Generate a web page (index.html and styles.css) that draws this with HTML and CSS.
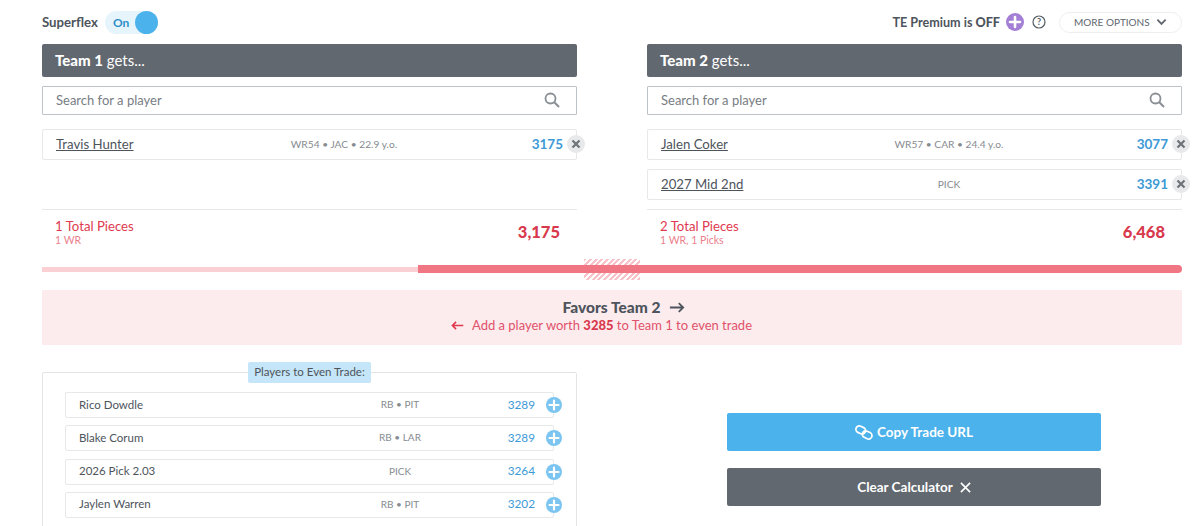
FILE: index.html
```html
<!DOCTYPE html>
<html lang="en">
  <head>
    <meta charset="UTF-8" />
    <title>Trade Calculator</title>
    <link rel="stylesheet" href="styles.css">
  </head>
  <body>
    <div class="page">
      <div class="options">
        <div class="superflex">
          <span>Superflex</span>
          <span class="toggle"><span class="toggle-label">On</span><span class="toggle-knob"></span></span>
        </div>
        <div class="options-right">
          <span class="te">TE Premium is <b>OFF</b></span>
          <span class="te-plus">
            <svg viewBox="0 0 18 18" width="18" height="18"><path d="M9 4v10M4 9h10" stroke="#fff" stroke-width="2.6" stroke-linecap="round"/></svg>
          </span>
          <svg class="help" viewBox="0 0 14 14" width="14" height="14"><circle cx="7" cy="7" r="6" fill="none" stroke="#555c63" stroke-width="1.2"/><text x="7" y="10.2" text-anchor="middle" class="help-mark">?</text></svg>
          <button class="more">MORE OPTIONS
            <svg viewBox="0 0 12 8" width="11" height="8"><path d="M1.5 1.5 6 6l4.500-4.500" fill="none" stroke="#60676e" stroke-width="2"/></svg>
          </button>
        </div>
      </div>

      <div class="teams">
        <section class="team">
          <h2 class="team-head"><b>Team 1</b> gets...</h2>
          <div class="search">
            <span>Search for a player</span>
            <svg viewBox="0 0 16 16" width="16" height="16"><circle cx="6.500" cy="6.500" r="5" fill="none" stroke="#8a8f94" stroke-width="1.800"/><path d="m10.300 10.300 4.700 4.700" stroke="#8a8f94" stroke-width="2"/></svg>
          </div>
          <div class="picked">
            <div class="player"><a class="name">Travis Hunter</a><span class="meta">WR54 &bull; JAC &bull; 22.9 y.o.</span><span class="value">3175</span><span class="remove"><svg viewBox="0 0 18 18" width="18" height="18"><path d="m5.500 5.500 7 7M12.500 5.500l-7 7" stroke="#6d7378" stroke-width="2.200"/></svg></span></div>
          </div>
          <div class="total">
            <div><div class="pieces">1 Total Pieces</div><div class="breakdown">1 WR</div></div>
            <div class="sum">3,175</div>
          </div>
        </section>
        <section class="team">
          <h2 class="team-head"><b>Team 2</b> gets...</h2>
          <div class="search">
            <span>Search for a player</span>
            <svg viewBox="0 0 16 16" width="16" height="16"><circle cx="6.500" cy="6.500" r="5" fill="none" stroke="#8a8f94" stroke-width="1.800"/><path d="m10.300 10.300 4.700 4.700" stroke="#8a8f94" stroke-width="2"/></svg>
          </div>
          <div class="picked">
            <div class="player"><a class="name">Jalen Coker</a><span class="meta">WR57 &bull; CAR &bull; 24.4 y.o.</span><span class="value">3077</span><span class="remove"><svg viewBox="0 0 18 18" width="18" height="18"><path d="m5.500 5.500 7 7M12.500 5.500l-7 7" stroke="#6d7378" stroke-width="2.200"/></svg></span></div>
            <div class="player"><a class="name">2027 Mid 2nd</a><span class="meta">PICK</span><span class="value">3391</span><span class="remove"><svg viewBox="0 0 18 18" width="18" height="18"><path d="m5.500 5.500 7 7M12.500 5.500l-7 7" stroke="#6d7378" stroke-width="2.200"/></svg></span></div>
          </div>
          <div class="total">
            <div><div class="pieces">2 Total Pieces</div><div class="breakdown">1 WR, 1 Picks</div></div>
            <div class="sum">6,468</div>
          </div>
        </section>
      </div>

      <div class="meter">
        <div class="meter-left"></div>
        <div class="meter-right"></div>
        <div class="meter-even"></div>
      </div>

      <div class="verdict">
        <div class="verdict-title">Favors Team 2
          <svg viewBox="0 0 18 12" width="16" height="11"><path d="M1 6h15M11 1l5 5-5 5" fill="none" stroke="#4d545c" stroke-width="2"/></svg>
        </div>
        <div class="verdict-note">
          <svg viewBox="0 0 18 12" width="13" height="9"><path d="M17 6H2M7 1 2 6l5 5" fill="none" stroke="#e0394f" stroke-width="2.200"/></svg>
          <span>Add a player worth <b>3285</b> to Team 1 to even trade</span>
        </div>
      </div>

      <div class="bottom">
        <section class="suggest">
          <div class="suggest-title">Players to Even Trade:</div>
          <div class="suggest-row"><span class="name">Rico Dowdle</span><span class="meta">RB &bull; PIT</span><span class="value">3289</span><span class="add"><svg viewBox="0 0 16 16" width="16" height="16"><path d="M8 3.500v9M3.500 8h9" stroke="#fff" stroke-width="2.200" stroke-linecap="round"/></svg></span></div>
          <div class="suggest-row"><span class="name">Blake Corum</span><span class="meta">RB &bull; LAR</span><span class="value">3289</span><span class="add"><svg viewBox="0 0 16 16" width="16" height="16"><path d="M8 3.500v9M3.500 8h9" stroke="#fff" stroke-width="2.200" stroke-linecap="round"/></svg></span></div>
          <div class="suggest-row"><span class="name">2026 Pick 2.03</span><span class="meta">PICK</span><span class="value">3264</span><span class="add"><svg viewBox="0 0 16 16" width="16" height="16"><path d="M8 3.500v9M3.500 8h9" stroke="#fff" stroke-width="2.200" stroke-linecap="round"/></svg></span></div>
          <div class="suggest-row"><span class="name">Jaylen Warren</span><span class="meta">RB &bull; PIT</span><span class="value">3202</span><span class="add"><svg viewBox="0 0 16 16" width="16" height="16"><path d="M8 3.500v9M3.500 8h9" stroke="#fff" stroke-width="2.200" stroke-linecap="round"/></svg></span></div>
        </section>
        <div class="actions">
          <button class="action action-copy">
            <svg viewBox="0 0 20 16" width="18" height="15"><g fill="none" stroke="#fff" stroke-width="1.900"><rect x="1" y="1.500" width="11" height="7.500" rx="3.700" transform="rotate(25 6.500 5)"/><rect x="8" y="7" width="11" height="7.500" rx="3.700" transform="rotate(25 13.500 10.700)"/></g></svg>
            Copy Trade URL
          </button>
          <button class="action action-clear">Clear Calculator
            <svg viewBox="0 0 12 12" width="11" height="11"><path d="m1 1 10 10M11 1 1 11" stroke="#fff" stroke-width="1.800"/></svg>
          </button>
        </div>
      </div>
    </div>
  </body>
</html>
```

FILE: styles.css
```css
html,
body {
  margin: 0;
  height: 526px;
  overflow: hidden;
}
body {
  font-family: "Lato", "Open Sans", sans-serif;
  color: #4d545c;
  background: #fff;
}
.page {
  padding: 10px 18px 0 42px;
}
.options {
  display: flex;
  justify-content: space-between;
  align-items: center;
  height: 24px;
}
.superflex {
  display: flex;
  align-items: center;
  gap: 7px;
  font-size: 13.200px;
  font-weight: 700;
}
.toggle {
  display: flex;
  align-items: center;
  justify-content: space-between;
  width: 53px;
  height: 23px;
  padding-left: 8px;
  box-sizing: border-box;
  border-radius: 12px;
  background: #e6f4fc;
  font-size: 12px;
  color: #2f8fc8;
}
.toggle-knob {
  width: 23px;
  height: 23px;
  border-radius: 50%;
  background: #4cb2eb;
}
.options-right {
  display: flex;
  align-items: center;
  font-size: 12.600px;
  font-weight: 700;
}
.te b {
  font-weight: 900;
}
.te-plus {
  display: flex;
  align-items: center;
  justify-content: center;
  width: 18px;
  height: 18px;
  margin-left: 6px;
  border-radius: 50%;
  background: #a37fd6;
}
.help {
  margin-left: 8px;
}
.help-mark {
  font-size: 9px;
  font-weight: 700;
  fill: #555c63;
}
.more {
  display: flex;
  align-items: center;
  justify-content: space-between;
  width: 123px;
  height: 21px;
  margin-left: 13px;
  padding: 0 14px;
  border: 1px solid #eceef0;
  border-radius: 11px;
  background: #fff;
  font: 400 10px "Lato", sans-serif;
  color: #60676e;
}
.teams {
  display: grid;
  grid-template-columns: 535px 535px;
  gap: 70px;
  margin-top: 10px;
}
.team-head {
  margin: 0;
  height: 33px;
  padding-left: 13px;
  border-radius: 2px;
  background: #62686f;
  color: #fff;
  font-size: 15px;
  font-weight: 400;
  line-height: 32px;
}
.team-head b {
  font-weight: 900;
}
.search {
  display: flex;
  justify-content: space-between;
  align-items: center;
  height: 29px;
  margin-top: 9px;
  padding: 0 16px 2px 13px;
  box-sizing: border-box;
  border: 1px solid #bcc2c8;
  border-radius: 1px;
  font-size: 13px;
  color: #777d83;
}
.picked {
  display: flex;
  flex-direction: column;
  gap: 9px;
  height: 80px;
  margin-top: 14px;
}
.player {
  position: relative;
  display: grid;
  grid-template-columns: 188px 200px 1fr;
  align-items: center;
  height: 31px;
  padding: 0 13px 2px 13px;
  box-sizing: border-box;
  border: 1px solid #e6e8ea;
  border-radius: 2px;
}
.name {
  font-size: 13.200px;
  color: #4d545c;
}
a.name {
  text-decoration: underline;
}
.meta {
  font-size: 10.200px;
  color: #868b90;
  text-align: center;
}
.value {
  font-size: 13.500px;
  font-weight: 700;
  color: #3d9ad6;
  text-align: right;
}
.remove {
  position: absolute;
  right: -9px;
  top: 5px;
  width: 18px;
  height: 18px;
  border-radius: 50%;
  background: #e8e9eb;
}
.remove svg {
  display: block;
}
.total {
  display: flex;
  justify-content: space-between;
  align-items: center;
  height: 44px;
  padding: 0 17px 2px 13px;
  border-top: 1px solid #e6e8ea;
  color: #e0394f;
}
.pieces {
  font-size: 13.200px;
  line-height: 16px;
}
.breakdown {
  font-size: 10.500px;
  line-height: 13px;
  color: #ea7f8c;
}
.sum {
  font-size: 16.500px;
  font-weight: 900;
  color: #d8394d;
}
.meter {
  position: relative;
  display: flex;
  align-items: center;
  height: 8px;
  margin-top: 9px;
}
.meter-left {
  width: 376px;
  height: 5px;
  background: #fbd0d5;
}
.meter-right {
  flex: 1;
  height: 8px;
  border-radius: 0 4px 4px 0;
  background: #f07684;
}
.meter-even {
  position: absolute;
  left: 542px;
  top: -6px;
  width: 56px;
  height: 21px;
  background: repeating-linear-gradient(135deg, #f9c2c9 0 2px, transparent 2px 4px);
  z-index: -1;
}
.verdict {
  height: 55px;
  margin-top: 17px;
  padding-top: 8px;
  box-sizing: border-box;
  background: #fdecee;
  text-align: center;
}
.verdict-title {
  display: flex;
  justify-content: center;
  align-items: center;
  gap: 9px;
  margin-left: 24px;
  font-size: 15.500px;
  font-weight: 900;
  line-height: 18px;
}
.verdict-note {
  display: flex;
  justify-content: center;
  align-items: center;
  gap: 8px;
  margin-right: 21px;
  font-size: 13px;
  line-height: 19px;
  color: #e0526a;
}
.verdict-note b {
  font-weight: 900;
  color: #d8394d;
}
.bottom {
  display: grid;
  grid-template-columns: 535px 535px;
  gap: 70px;
  margin-top: 27px;
}
.suggest {
  position: relative;
  display: flex;
  flex-direction: column;
  gap: 7.300px;
  height: 220px;
  padding: 19px 22px 0;
  box-sizing: border-box;
  border: 1px solid #e2e4e6;
  border-radius: 2px;
}
.suggest-title {
  position: absolute;
  left: 205px;
  top: -11px;
  width: 123px;
  height: 21px;
  border-radius: 2px;
  background: #c5e5f8;
  font-size: 11.500px;
  line-height: 20px;
  text-align: center;
}
.suggest-row {
  position: relative;
  display: grid;
  grid-template-columns: 261px 120px 1fr;
  align-items: center;
  height: 26px;
  padding: 0 18px 2px 13px;
  box-sizing: border-box;
  border: 1px solid #e6e8ea;
  border-radius: 2px;
}
.suggest-row .name {
  font-size: 11.500px;
}
.suggest-row .meta {
  font-size: 10px;
}
.suggest-row .value {
  font-size: 11.800px;
  font-weight: 400;
}
.add {
  position: absolute;
  right: -9px;
  top: 4px;
  width: 16px;
  height: 16px;
  border-radius: 50%;
  background: #7cc5f0;
}
.add svg {
  display: block;
}
.actions {
  display: flex;
  flex-direction: column;
  gap: 17px;
  width: 374px;
  margin: 41px 0 0 80px;
}
.action {
  display: flex;
  justify-content: center;
  align-items: center;
  gap: 4px;
  height: 38px;
  border: none;
  border-radius: 2px;
  color: #fff;
  font: 700 13.500px "Lato", sans-serif;
}
.action-copy {
  background: #4cb2eb;
}
.action-clear {
  gap: 7px;
  background: #62686f;
}
```
